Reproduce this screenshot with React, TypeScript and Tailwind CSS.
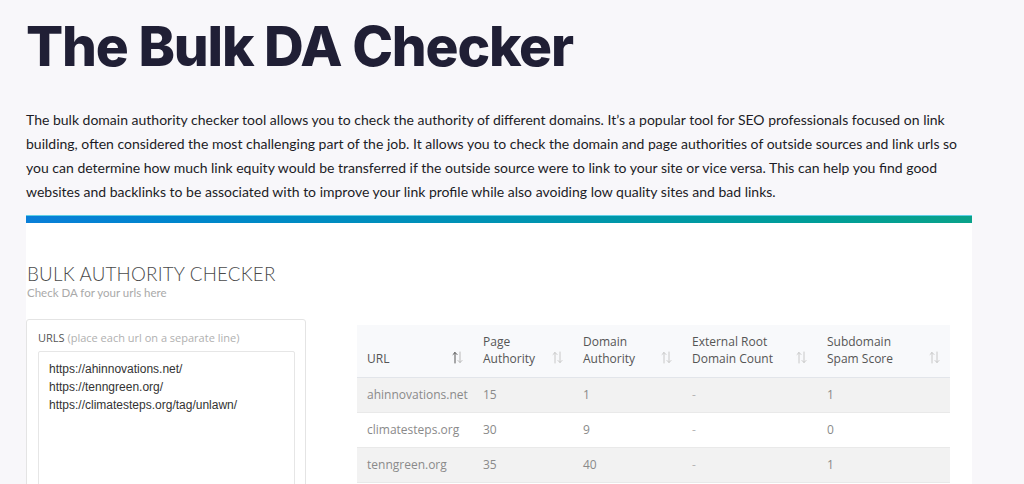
import React from 'react'

const paragraph = [
    "The bulk domain authority checker tool allows you to check the authority of different domains. It\u2019s a popular tool for SEO professionals focused on link",
    "building, often considered the most challenging part of the job. It allows you to check the domain and page authorities of outside sources and link urls so",
    "you can determine how much link equity would be transferred if the outside source were to link to your site or vice versa. This can help you find good",
    "websites and backlinks to be associated with to improve your link profile while also avoiding low quality sites and bad links.",
]

const rows = [
    { url: 'ahinnovations.net', pa: '15', da: '1', erdc: '-', spam: '1' },
    { url: 'climatesteps.org', pa: '30', da: '9', erdc: '-', spam: '0' },
    { url: 'tenngreen.org', pa: '35', da: '40', erdc: '-', spam: '1' },
]

function SortIcon({ active = false }: { active?: boolean }) {
    return (
        <svg width="11" height="13" viewBox="0 0 11 13" fill="none" className="flex-shrink-0">
            <g stroke={active ? '#555' : '#c8c8c8'} strokeWidth="1" strokeLinecap="round" strokeLinejoin="round">
                <path d="M3 12V1.5M1 3.5L3 1.5L5 3.5" />
            </g>
            <g stroke={active ? '#b9b9b9' : '#c8c8c8'} strokeWidth="1" strokeLinecap="round" strokeLinejoin="round">
                <path d="M8 1V11.5M6 9.5L8 11.5L10 9.5" />
            </g>
        </svg>
    )
}

function HeaderCell({ lines, width, active }: { lines: string[]; width: string; active?: boolean }) {
    return (
        <th className={`${width} align-bottom text-left font-normal px-[10px] pb-[10px]`}>
            <div className="flex items-end justify-between gap-1">
                <span className="leading-[17px]">
                    {lines.map((l) => (
                        <span key={l} className="block">{l}</span>
                    ))}
                </span>
                <span className="mb-[3px]"><SortIcon active={active} /></span>
            </div>
        </th>
    )
}

export default function App() {
    return (
        <div className="h-[484px] overflow-hidden bg-[#f8f7fa] pl-[26px]">
            <h1 className="pt-[14px] text-[55px] leading-[64px] font-extrabold tracking-[-1.2px] text-[#201f35] font-['Inter',sans-serif]">
                The Bulk DA Checker
            </h1>
            <p className="mt-[30px] text-[14px] leading-[24px] text-[#1c1c26] font-['Lato',sans-serif]">
                {paragraph.map((line) => (
                    <span key={line} className="block whitespace-nowrap">{line}</span>
                ))}
            </p>
            <div className="mt-[11px] w-[946px] h-[8px] bg-gradient-to-r from-[#0a7fd8] to-[#0aa28a] border-t border-[#5fd0e6]" />
            <div className="w-[946px] h-[300px] bg-white">
                <h2 className="pt-[39px] text-[18.8px] leading-[24px] font-light text-[#4a4a4a] tracking-[0.2px] font-['Lato',sans-serif] pl-[1px]">
                    BULK AUTHORITY CHECKER
                </h2>
                <div className="text-[11.5px] leading-[14px] text-[#a9a9a9] font-['Lato',sans-serif] pl-[1px]">
                    Check DA for your urls here
                </div>
                <div className="flex items-start gap-[51px] mt-[19px]">
                    <div className="w-[280px] h-[200px] border border-[#e4e4e4] rounded-[3px] px-[11px] pt-[10px] font-['Open_Sans',sans-serif]">
                        <div className="text-[11px] leading-[16px] text-[#555]">
                            URLS <span className="text-[#b0b0b0]">(place each url on a separate line)</span>
                        </div>
                        <textarea
                            readOnly
                            className="mt-[5px] w-[257px] h-[160px] resize-none border border-[#e6e6e6] rounded-[2px] px-[10px] pt-[8px] text-[12px] leading-[18px] text-[#333] outline-none font-['Liberation_Sans',sans-serif]"
                            defaultValue={'https://ahinnovations.net/\nhttps://tenngreen.org/\nhttps://climatesteps.org/tag/unlawn/'}
                        />
                    </div>
                    <table className="mt-[6px] w-[593px] table-fixed border-collapse text-[12px] font-['Open_Sans',sans-serif]">
                        <thead>
                            <tr className="h-[52px] bg-[#f8f9fb] border-b border-[#e2e5ea] text-[#555]">
                                <HeaderCell lines={['URL']} width="w-[116px]" active />
                                <HeaderCell lines={['Page', 'Authority']} width="w-[100px]" />
                                <HeaderCell lines={['Domain', 'Authority']} width="w-[109px]" />
                                <HeaderCell lines={['External Root', 'Domain Count']} width="w-[135px]" />
                                <HeaderCell lines={['Subdomain', 'Spam Score']} width="w-[133px]" />
                            </tr>
                        </thead>
                        <tbody className="text-[#8a8a8a]">
                            {rows.map((r, i) => (
                                <tr key={r.url} className={`h-[35px] border-b border-[#e9e9e9] ${i % 2 === 0 ? 'bg-[#f2f2f2]' : 'bg-white'}`}>
                                    <td className="px-[10px] whitespace-nowrap">{r.url}</td>
                                    <td className="px-[10px]">{r.pa}</td>
                                    <td className="px-[10px]">{r.da}</td>
                                    <td className="px-[10px] text-[#b5b5b5]">{r.erdc}</td>
                                    <td className="px-[10px]">{r.spam}</td>
                                </tr>
                            ))}
                        </tbody>
                    </table>
                </div>
            </div>
        </div>
    )
}
